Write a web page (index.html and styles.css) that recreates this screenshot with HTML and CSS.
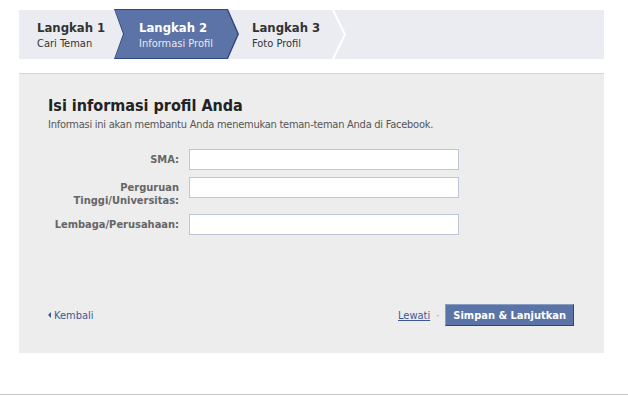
FILE: index.html
```html
<!DOCTYPE html>
<html lang="id">

<head>
  <meta charset="UTF-8">
  <meta name="viewport" content="width=device-width, initial-scale=1.0">
  <title>Langkah 2 - Informasi Profil</title>
  <link rel="stylesheet" href="styles.css">
</head>

<body>
  <div class="page">
    <div class="steps">
      <div class="step step-first">
        <div class="step-title">Langkah 1</div>
        <div class="step-sub">Cari Teman</div>
      </div>
      <div class="step step-active">
        <div class="step-title">Langkah 2</div>
        <div class="step-sub">Informasi Profil</div>
      </div>
      <div class="step step-last">
        <div class="step-title">Langkah 3</div>
        <div class="step-sub">Foto Profil</div>
        <svg class="step-sep" width="16" height="49" viewBox="0 0 16 49">
          <polyline points="1,0 13,24.5 1,49" fill="none" stroke="#fff" stroke-width="2" />
        </svg>
      </div>
    </div>

    <div class="panel">
      <h2 class="panel-title">Isi informasi profil Anda</h2>
      <p class="panel-desc">Informasi ini akan membantu Anda menemukan teman-teman Anda di Facebook.</p>

      <form class="profile-form">
        <label class="field-label" for="sma">SMA:</label>
        <input class="field-input" type="text" id="sma">

        <label class="field-label" for="kampus">Perguruan<br>Tinggi/Universitas:</label>
        <input class="field-input" type="text" id="kampus">

        <label class="field-label" for="kerja">Lembaga/Perusahaan:</label>
        <input class="field-input" type="text" id="kerja">
      </form>

      <div class="panel-footer">
        <a class="back-link" href="#"><span class="back-arrow"></span>Kembali</a>
        <div class="actions">
          <a class="skip-link" href="#">Lewati</a>
          <span class="dot">&middot;</span>
          <button class="btn-save" type="button">Simpan &amp; Lanjutkan</button>
        </div>
      </div>
    </div>
  </div>

  <div class="bottom-line"></div>
</body>

</html>
```

FILE: styles.css
```css
body {
  margin: 0;
  background-color: #fff;
  font-family: "DejaVu Sans Condensed", "DejaVu Sans", sans-serif;
  font-size: 11px;
  color: #333;
}

.page {
  width: 585px;
  padding: 10px 0 0 19px;
}

/* step bar */
.steps {
  display: flex;
  height: 49px;
  background-color: #ebecf1;
}

.step {
  position: relative;
  box-sizing: border-box;
  height: 49px;
  padding-top: 9px;
}

.step-first {
  width: 95px;
  padding-left: 18px;
}

.step-active {
  isolation: isolate;
  width: 125px;
  height: 50px;
  margin-top: -1px;
  padding-top: 10px;
  padding-left: 25px;
  background-color: #2f477a;
  clip-path: polygon(0 0, 114px 0, 125px 25px, 114px 50px, 0 50px, 9px 25px);
  color: #fff;
}

.step-active::before {
  content: "";
  position: absolute;
  inset: 0;
  z-index: -1;
  background-color: #5b73a6;
  clip-path: polygon(1px 1px, 113px 1px, 123.5px 25px, 113px 49px, 1px 49px, 10px 25px);
}

.step-last {
  width: 110px;
  padding-left: 13px;
}

.step-sep {
  position: absolute;
  top: 0;
  left: 93px;
}

.step-title {
  font-weight: bold;
  font-size: 13px;
  line-height: 17px;
}

.step-sub {
  line-height: 15px;
}

.step-active .step-sub {
  color: #e6eaf2;
}

/* panel */
.panel {
  margin-top: 14px;
  border-top: 1px solid #d4d4d4;
  background-color: #ededed;
  padding: 22px 29px 27px 29px;
}

.panel-title {
  margin: 0;
  font-size: 16px;
  line-height: 20px;
  color: #222;
}

.panel-desc {
  margin: 2px 0 0;
  color: #555;
  line-height: 14px;
  letter-spacing: -0.25px;
}

.profile-form {
  display: grid;
  grid-template-columns: 131px 270px;
  column-gap: 10px;
  row-gap: 7px;
  margin-top: 17px;
}

.field-label {
  text-align: right;
  font-weight: bold;
  color: #666;
  padding-top: 4px;
  line-height: 13px;
}

.field-input {
  box-sizing: border-box;
  height: 21px;
  margin: 0;
  border: 1px solid #bdc7d8;
  background-color: #fff;
  font-family: inherit;
  font-size: 11px;
}

.panel-footer {
  display: flex;
  justify-content: space-between;
  align-items: center;
  margin-top: 69px;
}

.back-link {
  display: flex;
  align-items: center;
  color: #3b5998;
  text-decoration: none;
}

.back-arrow {
  width: 0;
  height: 0;
  margin-right: 3px;
  border-top: 3px solid transparent;
  border-bottom: 3px solid transparent;
  border-right: 3px solid #3b5998;
}

.actions {
  display: flex;
  align-items: center;
}

.skip-link {
  color: #3b5998;
  text-decoration: underline;
}

.dot {
  color: #999;
  margin: 0 6px;
}

.btn-save {
  box-sizing: border-box;
  height: 22px;
  margin-right: 1px;
  padding: 0 7px;
  border: 1px solid;
  border-color: #8a9cc2 #29447e #29447e #8a9cc2;
  background-color: #5b74a8;
  color: #fff;
  font-family: inherit;
  font-size: 11px;
  font-weight: bold;
  cursor: pointer;
}

.bottom-line {
  margin-top: 41px;
  border-top: 1px solid #c8c8c8;
}
```
